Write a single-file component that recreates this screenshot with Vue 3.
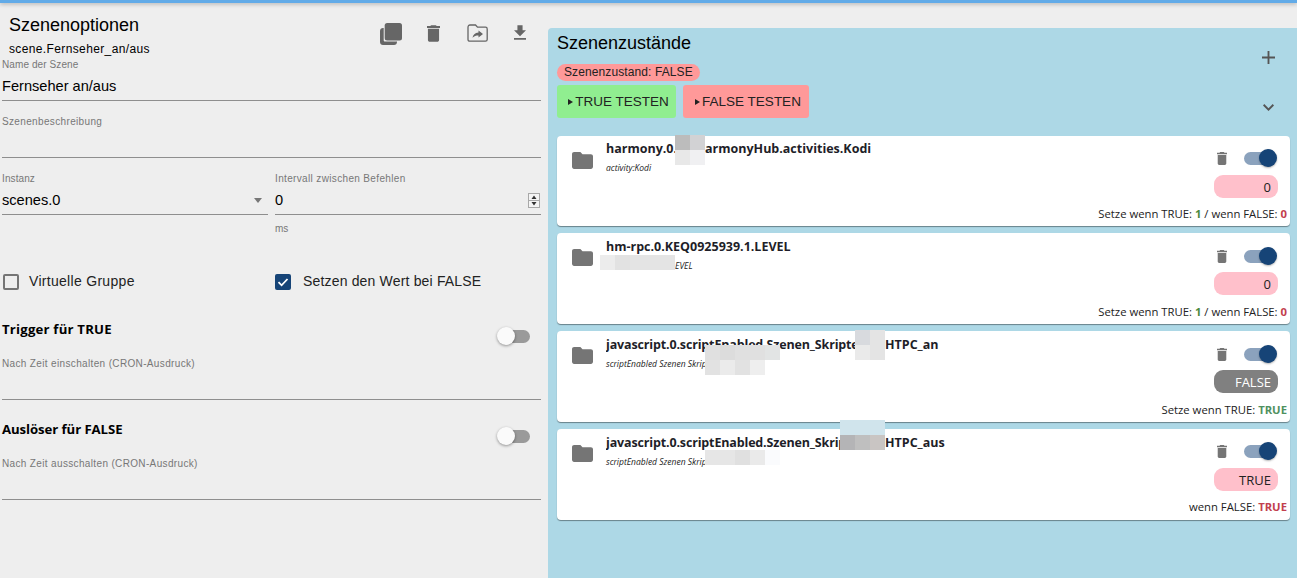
<script setup>
const setBoth = [['Setze wenn TRUE: ', ''], ['1', 'g'], [' / wenn FALSE: ', ''], ['0', 'r']]
const cards = [
  { head: 'harmony.0.', headW: 99, tail: 'armonyHub.activities.Kodi', sub: 'activity:Kodi', value: '0', kind: 'pink', parts: setBoth },
  { head: 'hm-rpc.0.KEQ0925939.1.LEVEL', headW: 0, tail: '', sub: 'EVEL', subIndent: true, value: '0', kind: 'pink', parts: setBoth },
  { head: 'javascript.0.scriptEnabled.Szenen_Skripte', headW: 279, tight: true, tail: 'HTPC_an', sub: 'scriptEnabled Szenen Skrip', value: 'FALSE', kind: 'grey', parts: [['Setze wenn TRUE: ', ''], ['TRUE', 'g2']] },
  { head: 'javascript.0.scriptEnabled.Szenen_Skrip', headW: 279, tight: true, tail: 'HTPC_aus', sub: 'scriptEnabled Szenen Skrip', value: 'TRUE', kind: 'pink', parts: [['wenn FALSE: ', ''], ['TRUE', 'r']] },
]
const mosaic = [
  [675,135,'#bcbcbc'],[690,135,'#d2d2d4'],[675,150,'#e8e8e8'],[690,150,'#f0f0f2'],
  [600,255,'#ececec'],[615,255,'#e2e2e2'],[630,255,'#e4e4e4'],[645,255,'#e4e4e4'],[660,255,'#e4e4e4'],
  [705,345,'#e0e0e0'],[720,345,'#dcdcdc'],[735,345,'#e0e0e0'],[750,345,'#e0e0e0'],[765,345,'#e2e4e4'],
  [705,360,'#e2e2e2'],[720,360,'#ebebeb'],[735,360,'#e2e2e2'],[750,360,'#eeeeee'],
  [855,330,'#d8dade'],[870,330,'#e4e4e4'],[855,345,'#eaeaea'],[870,345,'#e4e4e4'],
  [840,420,'#d0e4ec'],[855,420,'#d0e4ec'],[870,420,'#d0e4ec'],
  [840,435,'#b4b4b6'],[855,435,'#bfbfbf'],[870,435,'#c9c5c3'],
  [705,450,'#e6e6e6'],[720,450,'#e6e6e6'],[735,450,'#e0e0e0'],[750,450,'#eaeaea'],[765,450,'#fafbfd'],
]
</script>

<template>
  <div class="page">
    <div class="topbar"></div>
    <div class="main">
      <section class="left">
        <div class="head">
          <div class="head-text">
            <div class="h-title">Szenenoptionen</div>
            <div class="h-sub">scene.Fernseher_an/aus</div>
          </div>
          <div class="tools">
            <svg class="tool-copy" viewBox="0 0 22 22"><path d="M3.700 5H3C1.300 5 0 6.300 0 8V19C0 20.700 1.300 22 3 22H14C15.700 22 17 20.700 17 19V18.600H5C4.200 18.600 3.700 18.100 3.700 17.300Z"/><rect x="4.700" width="17.300" height="17.600" rx="2.500"/></svg>
            <svg class="tool-trash" viewBox="5 3 14 18"><path d="M6 19c0 1.100.9 2 2 2h8c1.100 0 2-.9 2-2V7H6v12zM19 4h-3.500l-1-1h-5l-1 1H5v2h14V4z"/></svg>
            <svg class="tool-folder" viewBox="0 0 21 18"><path fill="none" stroke-width="1.300" d="M1 3.500C1 2 1.800 1 3 1H8.500L10.500 3.200H18.500C19.500 3.200 20.200 4 20.200 5V15.500C20.200 16.500 19.500 17.200 18.500 17.200H2.700C1.700 17.200 1 16.500 1 15.500Z"/><path class="arrow" d="M11.500 6.500 16 10 11.500 13.500V11.400C9 11.400 7.200 12 5.500 13.800 6 11 7.800 9 11.500 8.600Z"/></svg>
            <svg class="tool-down" viewBox="5 3 14 17"><path d="M19 9h-4V3H9v6H5l7 7 7-7zM5 18v2h14v-2H5z"/></svg>
          </div>
        </div>

        <div class="field f-name">
          <div class="label">Name der Szene</div>
          <div class="value">Fernseher an/aus</div>
        </div>
        <div class="field f-desc">
          <div class="label">Szenenbeschreibung</div>
          <div class="value"></div>
        </div>
        <div class="two">
          <div class="col">
            <div class="field f-inst">
              <div class="label lab-short">Instanz</div>
              <div class="value sel">scenes.0<span class="caret"></span></div>
            </div>
          </div>
          <div class="col">
            <div class="field f-inst">
              <div class="label">Intervall zwischen Befehlen</div>
              <div class="value sel">0
                <span class="spin"><svg viewBox="0 0 12 15"><rect x=".5" y=".5" width="11" height="14" fill="#f4f4f4" stroke="#a8a8a8"/><path d="M6 2.500 8.500 6H3.500ZM3.500 9H8.500L6 12.500Z" fill="#333"/><path d="M1 7.500H11" stroke="#a8a8a8"/></svg></span>
              </div>
            </div>
            <div class="helper">ms</div>
          </div>
        </div>
        <div class="checks">
          <label class="check wide"><span class="box"></span>Virtuelle Gruppe</label>
          <label class="check"><span class="box on"><svg viewBox="0 0 16 16"><path d="M3.500 8.200 6.600 11.300 12.500 5" fill="none" stroke="#fff" stroke-width="1.800"/></svg></span>Setzen den Wert bei FALSE</label>
        </div>
        <div class="trigger t1">
          <div class="t-head"><div class="t-title">Trigger für TRUE</div><span class="sw-off"><i></i></span></div>
          <div class="label t-label">Nach Zeit einschalten (CRON-Ausdruck)</div>
        </div>
        <div class="trigger t2">
          <div class="t-head"><div class="t-title">Auslöser für FALSE</div><span class="sw-off"><i></i></span></div>
          <div class="label t-label">Nach Zeit ausschalten (CRON-Ausdruck)</div>
        </div>
      </section>

      <section class="right">
        <div class="r-head">
          <div>
            <div class="h-title r-title">Szenenzustände</div>
            <div class="chip">Szenenzustand: FALSE</div>
            <div class="btns">
              <button class="btn green"><span class="play"></span>TRUE TESTEN</button>
              <button class="btn red"><span class="play"></span>FALSE TESTEN</button>
            </div>
          </div>
          <div class="r-actions">
            <svg class="plus" viewBox="5 5 14 14"><path d="M19 13h-6v6h-2v-6H5v-2h6V5h2v6h6v2z"/></svg>
            <svg class="chev" viewBox="6 8.590 12 7.410"><path d="M16.590 8.590 12 13.170 7.410 8.590 6 10l6 6 6-6z"/></svg>
          </div>
        </div>
        <div class="cards">
          <div v-for="c in cards" :key="c.head + c.tail" class="card">
            <svg class="folder" viewBox="2 4 20 16"><path d="M10 4H4c-1.100 0-1.990.9-1.990 2L2 18c0 1.100.9 2 2 2h16c1.100 0 2-.9 2-2V8c0-1.100-.9-2-2-2h-8l-2-2z"/></svg>
            <div class="c-text">
              <div class="c-title"><span class="c-head" :class="{ tight: c.tight }" :style="c.headW ? { width: c.headW + 'px' } : null">{{ c.head }}</span>{{ c.tail }}</div>
              <div class="c-sub" :class="{ indent: c.subIndent }">{{ c.sub }}</div>
            </div>
            <div class="c-right">
              <div class="c-ctrl">
                <svg class="c-trash" viewBox="5 3 14 18"><path d="M6 19c0 1.100.9 2 2 2h8c1.100 0 2-.9 2-2V7H6v12zM19 4h-3.500l-1-1h-5l-1 1H5v2h14V4z"/></svg>
                <span class="sw-on"><i></i></span>
              </div>
              <div class="pill" :class="c.kind">{{ c.value }}</div>
              <div class="c-foot"><span v-for="(p, i) in c.parts" :key="i" :class="p[1]">{{ p[0] }}</span></div>
            </div>
          </div>
        </div>
      </section>
    </div>
    <div class="mosaic">
      <span v-for="(m, i) in mosaic" :key="i" :style="{ left: m[0] + 'px', top: m[1] + 'px', background: m[2] }"></span>
    </div>
  </div>
</template>

<style>
html, body { margin: 0; background: #eeeeee; }
</style>

<style scoped>
.page { position: relative; width: 1297px; height: 578px; overflow: hidden; background: #eee; font-family: "Liberation Sans", Arial, sans-serif; color: #000; }
.topbar { height: 3px; background: #62abe8; box-shadow: 0 1px 4px rgba(0,0,0,.3); }
.main { display: flex; height: 575px; }
.left { width: 548px; box-sizing: border-box; padding-left: 2px; padding-right: 7px; flex: none; }
.right { flex: 1; margin-top: 25px; background: #add8e6; border-top-left-radius: 4px; padding: 0 7px 0 9px; }

.head { display: flex; justify-content: space-between; height: 46px; margin-left: 7px; }
.h-title { font-size: 18px; line-height: 22px; }
.head-text { padding-top: 11px; }
.h-sub { font-size: 12px; line-height: 14px; margin-top: 6px; letter-spacing: .37px; }
.tools { display: flex; align-items: flex-start; padding-top: 20px; margin-right: 15px; }
.tools svg { fill: #666; display: block; flex: none; }
.tool-copy { width: 22px; height: 22px; margin-right: 25px; }
.tool-trash { width: 13px; height: 17px; margin-top: 2px; margin-right: 27px; }
.tool-folder { width: 21px; height: 18px; margin-top: 1px; margin-right: 26px; stroke: #666; }
.tool-folder .arrow { stroke: none; }
.tool-down { width: 12px; height: 15px; margin-top: 2px; }

.field { border-bottom: 1px solid #8e8e8e; box-sizing: border-box; }
.label { font-size: 10px; line-height: 12px; color: #777; letter-spacing: .35px; }
.lab-short, .f-name .label { letter-spacing: .1px; }
.value { font-size: 14.600px; line-height: 18px; position: relative; }
.f-name { height: 51px; margin-top: 1px; padding-top: 9px; }
.f-name .value { margin-top: 6px; }
.f-desc { height: 57px; padding-top: 15px; }
.two { display: flex; gap: 7px; }
.col { flex: 1; min-width: 0; }
.f-inst { height: 57px; padding-top: 15px; }
.f-inst .value { margin-top: 6px; }
.sel { display: flex; justify-content: space-between; align-items: center; }
.caret { width: 0; height: 0; border: 4.500px solid transparent; border-top: 5px solid #777; border-bottom: 0; margin-right: 6px; }
.spin { display: block; width: 12px; height: 15px; margin-right: 1px; }
.spin svg { display: block; }
.helper { font-size: 10px; line-height: 12px; color: #777; margin-top: 8px; }

.checks { display: flex; gap: 7px; margin-top: 38px; }
.check { flex: 1; display: flex; align-items: center; font-size: 14px; line-height: 17px; color: #222; letter-spacing: .17px; }
.check.wide { letter-spacing: .3px; }
.box { width: 16px; height: 16px; box-sizing: border-box; border: 2px solid #757575; border-radius: 2px; margin: 0 10px 0 1px; display: block; }
.box.on { background: #164477; border: 0; }
.box.on svg { display: block; }
.check .box.on { margin-left: 0; margin-right: 12px; }

.trigger { border-bottom: 1px solid #8e8e8e; box-sizing: border-box; position: relative; height: 79px; }
.t1 { margin-top: 31px; }
.t2 { margin-top: 21px; }
.t-head { display: flex; justify-content: space-between; align-items: flex-start; height: 26px; }
.t-title { font-family: "Open Sans", sans-serif; font-weight: 700; font-size: 13.200px; letter-spacing: .2px; line-height: 16px; }
.t2 .t-title { letter-spacing: -.08px; }
.t-label { margin-top: 11px; }
.sw-off { width: 33px; height: 19px; position: relative; display: block; margin-top: 6px; margin-right: 11px; }
.sw-off::before { content: ""; position: absolute; left: 1px; right: 0; top: 3px; height: 13px; border-radius: 7px; background: #9a9a9a; }
.sw-off i { position: absolute; left: 0; top: 0; width: 18px; height: 18px; border-radius: 50%; background: #fafafa; box-shadow: 0 1px 3px rgba(0,0,0,.4); }

.r-head { display: flex; justify-content: space-between; height: 107px; }
.r-title { padding-top: 4px; }
.chip { display: inline-block; margin-top: 10px; height: 17px; line-height: 17px; padding: 0 7px; background: #f99; border-radius: 9px; font-size: 12px; letter-spacing: .1px; color: #222; vertical-align: top; }
.btns { display: flex; gap: 7px; margin-top: 4px; }
.btn { height: 33px; border: 0; border-radius: 3px; font-family: inherit; font-size: 13.500px; color: #222; display: flex; align-items: center; justify-content: center; padding: 0 0 0 4px; white-space: nowrap; box-sizing: border-box; }
.green { background: #90ee90; width: 119px; }
.red { background: #f99; width: 126px; }
.play { width: 0; height: 0; border-left: 5.500px solid #222; border-top: 3.500px solid transparent; border-bottom: 3.500px solid transparent; margin-right: 2px; }
.r-actions { display: flex; flex-direction: column; align-items: center; width: 40px; margin-right: 2px; fill: #555; padding-top: 23px; box-sizing: border-box; }
.plus { width: 13px; height: 13px; display: block; }
.chev { width: 11px; height: 7px; display: block; margin-top: 40px; }

.cards { display: flex; flex-direction: column; gap: 7px; margin-top: .6px; font-family: "Open Sans", sans-serif; }
.card { height: 90.800px; background: #fff; border-radius: 4px; box-shadow: 0 1px 1px rgba(0,0,0,.4); display: flex; box-sizing: border-box; color: #222; }
.folder { width: 21px; height: 17px; fill: #757575; margin: 16px 0 0 15px; flex: none; }
.c-text { margin-left: 13px; padding-top: 4.600px; flex: 1; min-width: 0; }
.c-title { font-weight: 700; font-size: 12.500px; line-height: 18px; white-space: nowrap; color: #1e1e28; }
.c-head { display: inline-block; overflow: hidden; vertical-align: top; }
.c-head.tight { letter-spacing: -.15px; }
.c-sub { font-style: italic; font-size: 8.500px; line-height: 12px; margin-top: 4px; white-space: nowrap; }
.c-sub.indent { padding-left: 69px; }
.c-right { width: 200px; flex: none; display: flex; flex-direction: column; align-items: flex-end; padding-right: 3px; box-sizing: border-box; }
.c-ctrl { display: flex; align-items: center; margin-top: 12.900px; margin-right: 10px; height: 20px; }
.c-trash { width: 10px; height: 13px; fill: #757575; margin-right: 17px; }
.sw-on { width: 33px; height: 19px; display: block; position: relative; }
.sw-on::before { content: ""; position: absolute; left: 0; right: 1px; top: 3px; height: 13px; border-radius: 7px; background: #8ba2bd; }
.sw-on i { position: absolute; right: 0; top: 0; width: 18px; height: 18px; border-radius: 50%; background: #164477; box-shadow: 0 1px 2px rgba(0,0,0,.3); }
.pill { width: 64px; height: 23px; box-sizing: border-box; margin-top: 6.100px; margin-right: 9px; border-radius: 9px; text-align: right; padding-right: 7px; font-size: 13px; line-height: 24px; }
.pill.pink { background: #ffc0cb; color: #222; }
.pill.grey { background: #808080; color: #fff; }
.c-foot { font-size: 11.300px; line-height: 15px; margin-top: 8.400px; white-space: pre; }
.g { color: #4d8a3c; font-weight: 700; }
.r { color: #c2404e; font-weight: 700; }
.g2 { color: #4f9160; font-weight: 700; }

.mosaic span { position: absolute; width: 15px; height: 15px; display: block; }
</style>
